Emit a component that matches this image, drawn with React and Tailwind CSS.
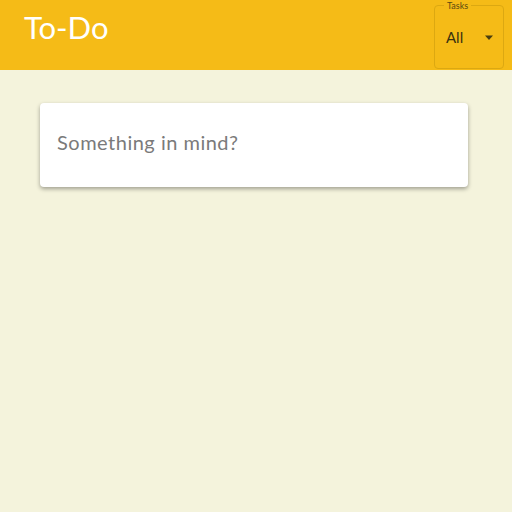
export default function App() {
  return (
    <div className="min-h-[512px] w-full bg-[#f4f3dc]" style={{ fontFamily: "Lato, 'Open Sans', sans-serif" }}>
      <header className="flex h-[70px] items-start justify-between bg-[#f5bb17] pl-6 pr-2">
        <h1 className="mt-[12px] text-[31px] font-normal leading-none text-white">To-Do</h1>
        <div className="relative mt-[5px] h-[64px] w-[70px] rounded border border-[#dca811]">
          <span className="absolute left-[9px] top-[-5px] bg-[#f5bb17] px-[3px] text-[9px] leading-none text-[#5a4a10]">Tasks</span>
          <div className="flex h-full items-center justify-between pl-[11px] pr-[9px]">
            <span className="text-[15px] text-[#3a3210]">All</span>
            <svg width="10" height="6" viewBox="0 0 10 6" className="mt-[1px]">
              <path d="M1 0.5 L5 5 L9 0.5 Z" fill="#4a3e10" />
            </svg>
          </div>
        </div>
      </header>
      <main className="px-10 pt-[33px]">
        <div className="flex h-[84px] w-[428px] items-center rounded-[4px] bg-white px-[17px] pb-[6px] shadow-[0_2px_4px_rgba(0,0,0,0.35)]">
          <span className="text-[20px] tracking-[0.5px] text-[#7a7a7a]">Something in mind?</span>
        </div>
      </main>
    </div>
  );
}
